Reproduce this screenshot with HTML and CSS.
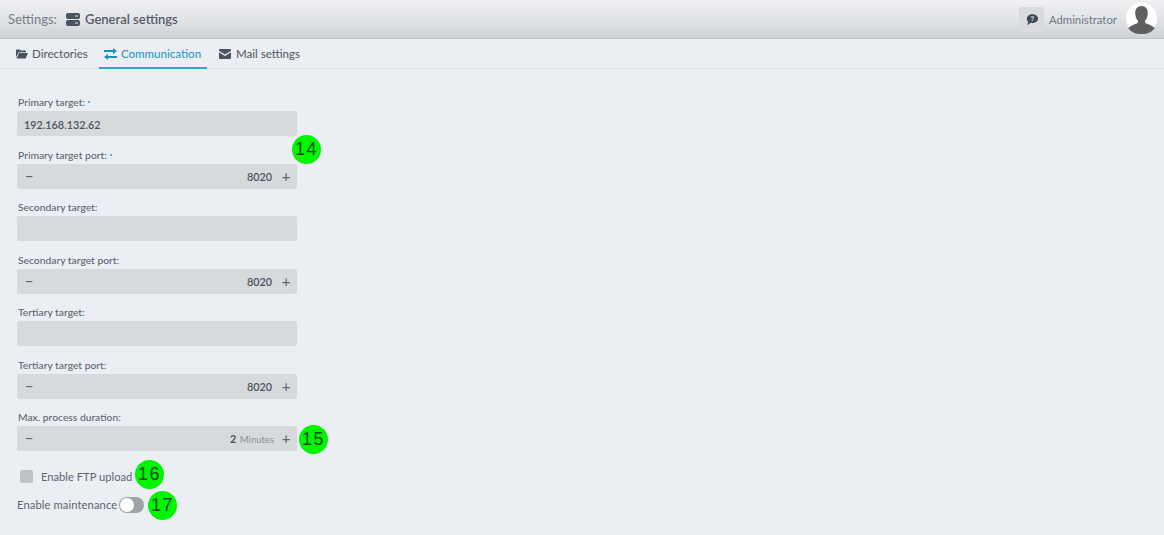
FILE: index.html
```html
<!DOCTYPE html>
<html lang="en">
<head>
<meta charset="utf-8">
<title>General settings</title>
<link rel="stylesheet" href="styles.css">
</head>
<body>
<header class="topbar">
  <span class="crumb">Settings:</span>
  <svg class="server" viewBox="0 0 14 13" width="14" height="13"><path fill="#4b5360" d="M2 0h10a2 2 0 0 1 2 2v2a2 2 0 0 1-2 2H2a2 2 0 0 1-2-2V2a2 2 0 0 1 2-2zm0 7h10a2 2 0 0 1 2 2v2a2 2 0 0 1-2 2H2a2 2 0 0 1-2-2V9a2 2 0 0 1 2-2z"/><path fill="#dfe2e5" d="M9 2.500h3v1H9zM9 9.500h3v1H9z"/></svg>
  <span class="page-title">General settings</span>
  <span class="spacer"></span>
  <span class="help"><svg viewBox="0 0 14 12" width="12" height="11"><path fill="#3f4753" d="M7.500 0C11 0 14 2.200 14 5s-3 5-6.500 5c-.7 0-1.300-.1-1.900-.2C4.500 11 3 12 1 12c1-1 1.500-2 1.700-3.300C1.600 7.800 1 6.500 1 5c0-2.800 3-5 6.500-5z"/><text x="7.500" y="8" font-size="8" font-weight="700" text-anchor="middle" fill="#dde0e3" font-family="Liberation Sans">?</text></svg></span>
  <span class="user">Administrator</span>
  <span class="avatar"><svg viewBox="0 0 32 32" width="31" height="31"><circle cx="16" cy="16" r="16" fill="#fff"/><path fill="#5f5f5f" d="M16 3c4.200 0 6.500 3.200 6.500 7.500 0 3.400-1.300 6.300-3 8 0 1.500.5 2.300 2 3 3 1.200 6 2.300 8.200 4.500A16 16 0 0 1 16 32 16 16 0 0 1 2.300 26c2.200-2.200 5.200-3.300 8.200-4.500 1.500-.7 2-1.500 2-3-1.700-1.700-3-4.600-3-8C9.500 6.200 11.800 3 16 3z"/></svg></span>
</header>
<nav class="tabs">
  <a class="tab">
    <svg viewBox="0 0 13 10" width="12" height="10"><path fill="#4b5360" d="M0 1a1 1 0 0 1 1-1h3l1.200 1.200H10a1 1 0 0 1 1 1V3H3L0 8.500z"/><path fill="#4b5360" d="M3.300 4H13l-2.500 6H.6z"/></svg>
    <span>Directories</span>
  </a>
  <a class="tab active">
    <svg viewBox="0 0 13 12" width="13" height="12"><path fill="#1a93c0" d="M9 0l4 3-4 3V4H0V2h9zM4 6v2h9v2H4v2L0 9z"/></svg>
    <span>Communication</span>
  </a>
  <a class="tab last">
    <svg viewBox="0 0 12 10" width="12" height="10"><path fill="#4b5360" d="M1 0h10a1 1 0 0 1 1 1v.8L6 5.600 0 1.800V1a1 1 0 0 1 1-1zM0 3.200l6 3.800 6-3.800V9a1 1 0 0 1-1 1H1a1 1 0 0 1-1-1z"/></svg>
    <span>Mail settings</span>
  </a>
</nav>
<main class="content">
  <form class="form">
    <div class="field">
      <label class="label">Primary target: <i class="req"></i></label>
      <div class="input">192.168.132.62</div>
    </div>
    <div class="field">
      <label class="label">Primary target port: <i class="req"></i></label>
      <div class="input stepper"><span class="btn">−</span><span class="val">8020</span><span class="btn">+</span></div>
    </div>
    <div class="field">
      <label class="label">Secondary target:</label>
      <div class="input"></div>
    </div>
    <div class="field">
      <label class="label">Secondary target port:</label>
      <div class="input stepper"><span class="btn">−</span><span class="val">8020</span><span class="btn">+</span></div>
    </div>
    <div class="field">
      <label class="label">Tertiary target:</label>
      <div class="input"></div>
    </div>
    <div class="field">
      <label class="label">Tertiary target port:</label>
      <div class="input stepper"><span class="btn">−</span><span class="val">8020</span><span class="btn">+</span></div>
    </div>
    <div class="field">
      <label class="label">Max. process duration:</label>
      <div class="input stepper"><span class="btn">−</span><span class="val"><b class="num">2</b> <small class="unit">Minutes</small></span><span class="btn">+</span></div>
    </div>
    <div class="check-row"><span class="checkbox"></span><span>Enable FTP upload</span></div>
    <div class="switch-row"><span>Enable maintenance</span><span class="switch"><span class="knob"></span></span></div>
  </form>
  <span class="badge b14">14</span>
  <span class="badge b15">15</span>
  <span class="badge b16">16</span>
  <span class="badge b17">17</span>
</main>
</body>
</html>
```
FILE: styles.css
```css
* { box-sizing: border-box; }
html, body { margin: 0; height: 100%; }
body {
  background: #ebeef2;
  font-family: Lato, "Noto Sans", sans-serif;
  color: #4b5360;
  overflow: hidden;
}
.topbar {
  height: 39px;
  display: flex;
  align-items: center;
  padding: 0 7px 0 8px;
  background: linear-gradient(#f0f1f3 0%, #e2e4e7 50%, #cfd2d5 100%);
  border-bottom: 1px solid #c4c8cc;
}
.crumb { width: 58px; font-size: 13px; color: #767d87; }
.server { margin-right: 5px; }
.page-title { font-size: 13px; font-weight: 600; color: #555c67; }
.spacer { flex: 1; }
.help {
  width: 25px; height: 25px;
  display: flex; align-items: center; justify-content: center;
  background: #d9dbde;
  border-radius: 3px;
  margin-right: 5px;
}
.user { width: 77px; font-size: 11.300px; color: #6f7782; }
.avatar { width: 31px; height: 31px; display: block; margin-top: -2px; }
.avatar svg { display: block; }
.tabs {
  height: 30px;
  display: flex;
  padding-left: 5px;
  border-bottom: 1px solid #dcdfe3;
}
.tab {
  display: flex;
  align-items: center;
  gap: 4px;
  padding: 0 12px 1px 11px;
  height: 30px;
  font-size: 11.500px;
  font-weight: 500;
  color: #5a616c;
}
.tab svg { flex: none; }
.tab:first-child { width: 94px; }
.tab.active { color: #2b9ac4; border-bottom: 2px solid #33a3cc; padding: 1px 6px 0 5px; width: 108px; }
.tab.last { padding-left: 12px; gap: 5px; }
.content { position: relative; height: 466px; }
.form { padding: 25px 0 0 17px; width: 297px; }
.field { height: 52.500px; }
.label {
  display: flex; align-items: center; gap: 3px;
  height: 16px;
  font-size: 10.300px;
  font-weight: 500;
  color: #5e6570;
  padding-left: 1px;
}
.req { width: 2px; height: 2px; border-radius: 50%; background: #2b9ac4; }
.input {
  height: 25px;
  margin-top: 1px;
  background: #d7dadc;
  border-radius: 2px;
  padding: 1px 7px 0;
  display: flex;
  align-items: center;
  font-size: 10.800px;
  font-weight: 600;
  color: #4b5360;
}
.stepper { justify-content: space-between; padding: 0 5px 0 6px; }
.btn { width: 12px; text-align: center; font-size: 15px; font-weight: 400; color: #5e6570; line-height: 1; }
.val { margin-left: auto; margin-right: 8px; white-space: nowrap; }
.num { font-weight: 700; }
.unit { font-size: 9.500px; color: #8a9099; font-weight: 400; margin-left: 1px; margin-right: -2px; }
.check-row {
  display: flex; align-items: center;
  margin-top: 6px;
  padding-left: 3px;
  height: 18px;
  gap: 8px;
  font-size: 11.200px;
  color: #5e6570;
}
.checkbox { width: 13px; height: 13px; background: #bec2c7; border-radius: 2px; }
.switch-row {
  display: flex; align-items: center;
  margin-top: 10px;
  height: 18px;
  gap: 2px;
  font-size: 11.200px;
  letter-spacing: .1px;
  color: #5e6570;
}
.switch { width: 25px; height: 16px; border-radius: 8px; background: #9ea3a9; position: relative; display: block; }
.knob { position: absolute; left: 1px; top: 1px; width: 14px; height: 14px; border-radius: 50%; background: #fff; }
.badge {
  position: absolute;
  width: 29px; height: 29px;
  border-radius: 50%;
  background: #00f500;
  color: #1a4a1a;
  font-family: "Liberation Sans", sans-serif;
  font-size: 18px;
  letter-spacing: 1.500px;
  display: flex; align-items: center; justify-content: center;
}
.b14 { left: 292px; top: 66px; }
.b15 { left: 299px; top: 356px; }
.b16 { left: 135px; top: 391px; }
.b17 { left: 148px; top: 422px; }
```
